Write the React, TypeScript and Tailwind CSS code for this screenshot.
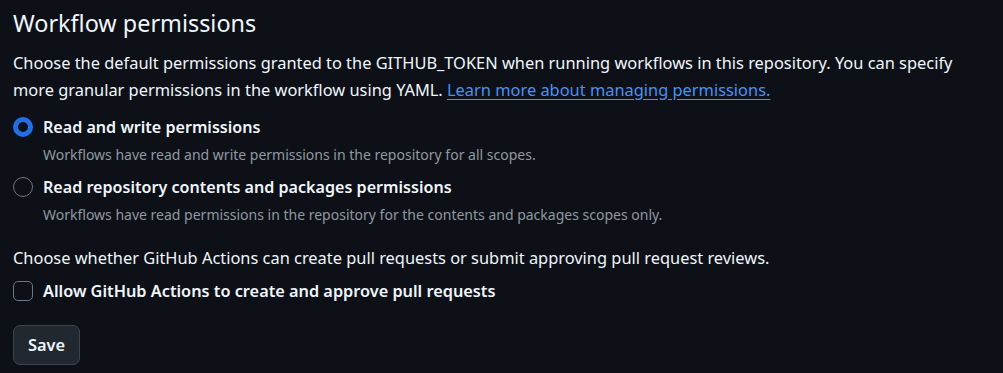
export default function App() {
  return (
    <div className="min-h-screen bg-[#0d1117] px-[13px] pt-[4px] text-[#f0f6fc] [font-family:'Noto_Sans',sans-serif]">
      <h2 className="text-[23.4px] leading-[38px] font-normal">Workflow permissions</h2>

      <p className="mt-[8px] text-[16.4px] leading-[26.5px] text-[#f0f6fc]">
        Choose the default permissions granted to the GITHUB_TOKEN when running workflows in this repository. You can
        specify more granular permissions in the workflow using YAML.{" "}
        <a href="#" className="text-[#4493f8] underline underline-offset-[3px]">
          Learn more about managing permissions.
        </a>
      </p>

      <div className="mt-[10px] space-y-[5px]">
        <label className="flex gap-[10px]">
          <span className="mt-[4px] h-[20px] w-[20px] shrink-0 rounded-full border-[5px] border-[#1f6feb] bg-[#0d1117]" />
          <span>
            <span className="block text-[16.1px] leading-[28px] font-semibold">Read and write permissions</span>
            <span className="block text-[14px] leading-[27px] text-[#9198a1]">
              Workflows have read and write permissions in the repository for all scopes.
            </span>
          </span>
        </label>
        <label className="flex gap-[10px]">
          <span className="mt-[4px] h-[20px] w-[20px] shrink-0 rounded-full border border-[#6e7681] bg-[#0d1117]" />
          <span>
            <span className="block text-[16.1px] leading-[28px] font-semibold">
              Read repository contents and packages permissions
            </span>
            <span className="block text-[14px] leading-[27px] text-[#9198a1]">
              Workflows have read permissions in the repository for the contents and packages scopes only.
            </span>
          </span>
        </label>
      </div>

      <p className="mt-[17px] text-[16.4px] leading-[26px]">
        Choose whether GitHub Actions can create pull requests or submit approving pull request reviews.
      </p>

      <label className="mt-[6px] flex items-center gap-[10px]">
        <span className="h-[20px] w-[20px] shrink-0 rounded-[5px] border border-[#6e7681] bg-[#0d1117]" />
        <span className="text-[16.3px] leading-[28px] font-semibold">Allow GitHub Actions to create and approve pull requests</span>
      </label>

      <button className="mt-[20px] h-[40px] rounded-[7px] border border-[#3d444d] bg-[#212830] px-[14px] text-[16.4px] font-semibold text-[#f0f6fc]">
        Save
      </button>
    </div>
  );
}
